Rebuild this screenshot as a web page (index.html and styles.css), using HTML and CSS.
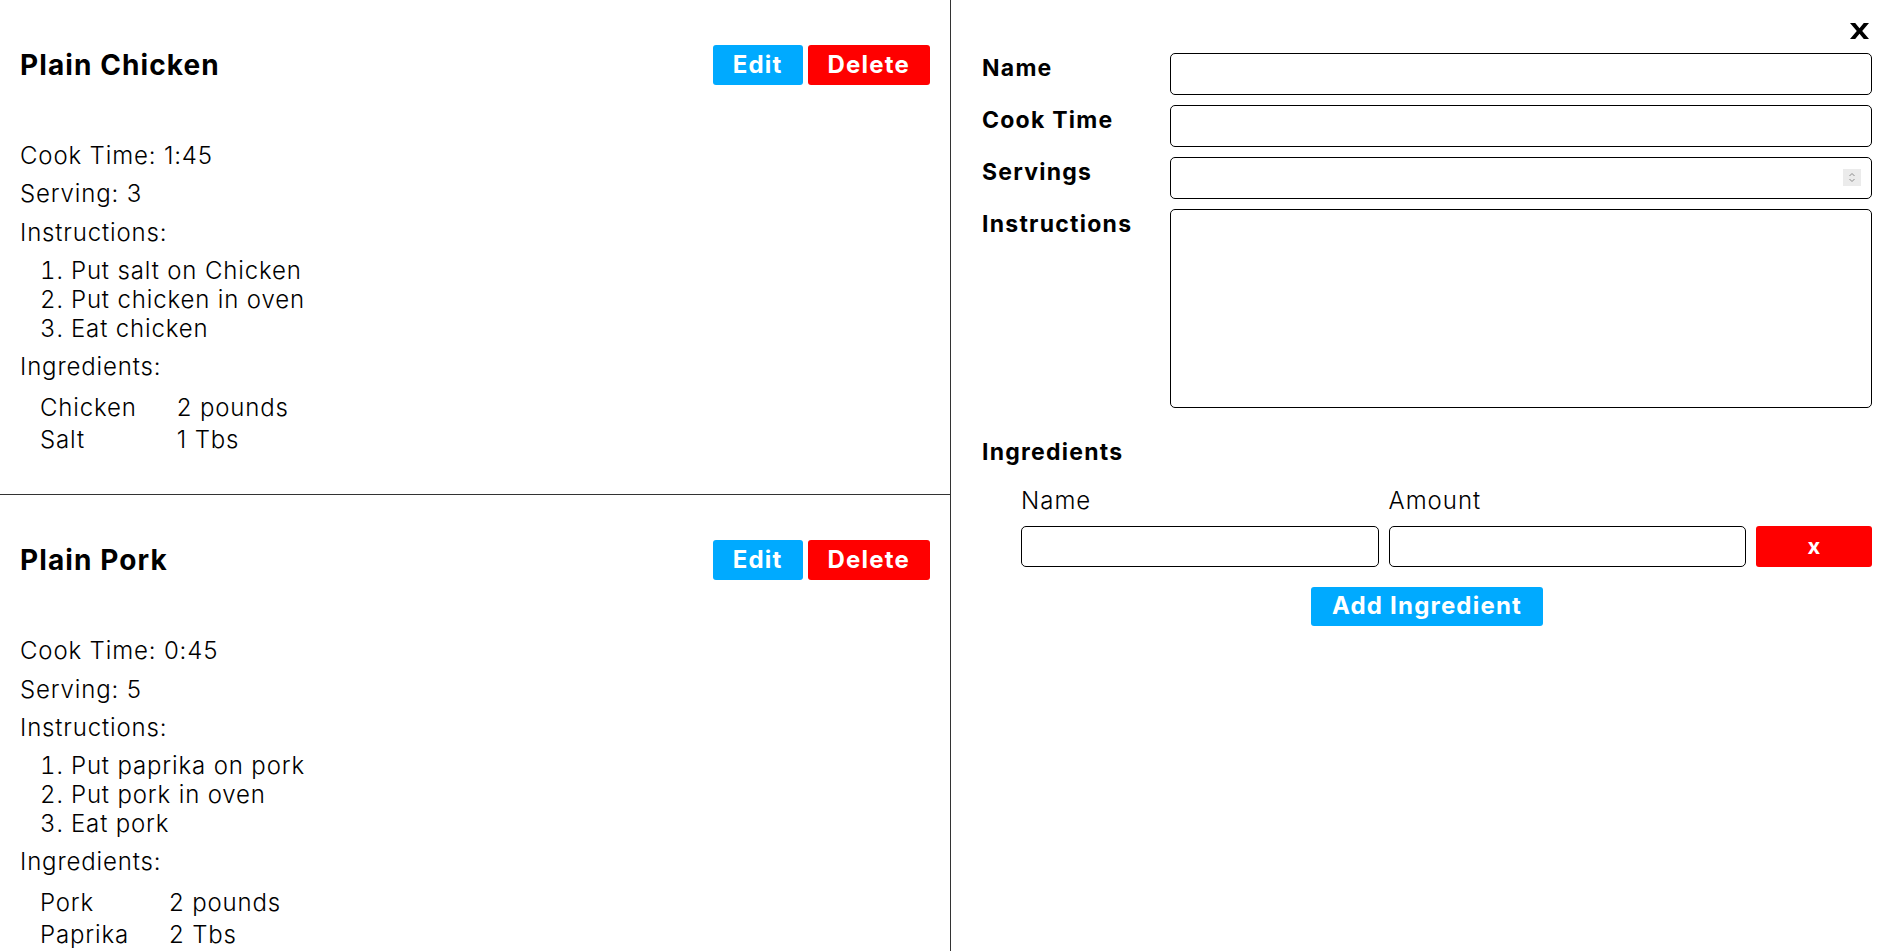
FILE: index.html
```html
<!DOCTYPE html>
<html lang="en">
<head>
<meta charset="utf-8">
<title>Recipes</title>
<link rel="stylesheet" href="styles.css">
</head>
<body>
<div class="app">
  <section class="recipes">
    <article class="recipe">
      <header class="recipe-head">
        <h2 class="recipe-title">Plain Chicken</h2>
        <div class="actions">
          <button class="btn btn-edit">Edit</button>
          <button class="btn btn-delete">Delete</button>
        </div>
      </header>
      <div class="recipe-body">
        <p>Cook Time: 1:45</p>
        <p>Serving: 3</p>
        <p>Instructions:</p>
        <ol class="steps">
          <li>Put salt on Chicken</li>
          <li>Put chicken in oven</li>
          <li>Eat chicken</li>
        </ol>
        <p>Ingredients:</p>
        <div class="ing-list">
          <span>Chicken</span><span>2 pounds</span>
          <span>Salt</span><span>1 Tbs</span>
        </div>
      </div>
    </article>
    <article class="recipe">
      <header class="recipe-head">
        <h2 class="recipe-title">Plain Pork</h2>
        <div class="actions">
          <button class="btn btn-edit">Edit</button>
          <button class="btn btn-delete">Delete</button>
        </div>
      </header>
      <div class="recipe-body">
        <p>Cook Time: 0:45</p>
        <p>Serving: 5</p>
        <p>Instructions:</p>
        <ol class="steps">
          <li>Put paprika on pork</li>
          <li>Put pork in oven</li>
          <li>Eat pork</li>
        </ol>
        <p>Ingredients:</p>
        <div class="ing-list">
          <span>Pork</span><span>2 pounds</span>
          <span>Paprika</span><span>2 Tbs</span>
        </div>
      </div>
    </article>
  </section>

  <aside class="editor">
    <div class="editor-top">
      <button class="close" aria-label="Close">
        <svg width="19" height="16" viewBox="0 0 19 16"><polygon points="0,0 5.2,0 9.5,5.3 13.8,0 19,0 12.2,8 19,16 13.8,16 9.5,10.7 5.2,16 0,16 6.8,8" fill="#000"/></svg>
      </button>
    </div>
    <form class="form">
      <div class="form-grid">
        <label class="form-label">Name</label>
        <input class="input" type="text">
        <label class="form-label">Cook Time</label>
        <input class="input" type="text">
        <label class="form-label">Servings</label>
        <div class="number-wrap">
          <input class="input input-number" type="number">
          <span class="spinner" aria-hidden="true">
            <svg width="18" height="17" viewBox="0 0 18 17"><path d="M6.5 7 L9 4.5 L11.5 7 M6.5 10 L9 12.5 L11.5 10" fill="none" stroke="#8a8a8a" stroke-width="1"/></svg>
          </span>
        </div>
        <label class="form-label">Instructions</label>
        <textarea class="input textarea"></textarea>
      </div>
      <h3 class="ing-heading">Ingredients</h3>
      <div class="ing-grid">
        <span class="ing-label">Name</span>
        <span class="ing-label">Amount</span>
        <span></span>
        <input class="input ing-input" type="text">
        <input class="input ing-input" type="text">
        <button type="button" class="btn btn-remove">x</button>
      </div>
      <div class="add-row">
        <button type="button" class="btn btn-add">Add Ingredient</button>
      </div>
    </form>
  </aside>
</div>
</body>
</html>
```
FILE: styles.css
```css
* { box-sizing: border-box; }
html, body { margin: 0; height: 100%; }
body {
  font-family: Inter, "Noto Sans", "Liberation Sans", sans-serif;
  color: #000;
  background: #fff;
  overflow: hidden;
}
.app {
  display: grid;
  grid-template-columns: 951px 1fr;
  height: 951px;
}
.recipes {
  border-right: 1px solid #333;
  overflow: hidden;
}
.recipe {
  padding: 45px 20px 37px;
}
.recipe + .recipe {
  border-top: 1px solid #333;
}
.recipe-head {
  display: flex;
  justify-content: space-between;
  align-items: center;
  height: 40px;
}
.recipe-title {
  margin: 0;
  font-size: 28px;
  font-weight: 700;
  letter-spacing: 1.1px;
}
.actions {
  display: flex;
  gap: 5px;
}
.btn {
  height: 40px;
  padding: 0 20px;
  border: 0;
  border-radius: 3px;
  color: #fff;
  font-family: inherit;
  font-weight: 700;
  font-size: 24px;
  line-height: 1;
  letter-spacing: 1.2px;
  cursor: pointer;
}
.btn-edit { background: #00aaff; }
.btn-delete { background: #ff0000; }
.recipe-body {
  margin-top: 57px;
  font-size: 24px;
  line-height: 28.8px;
  display: flex;
  flex-direction: column;
  align-items: flex-start;
  gap: 9.6px;
  font-weight: 300;
  letter-spacing: 0.85px;
}
.recipe-body p { margin: 0; }
.steps {
  margin: 0;
  padding: 0 0 0 20px;
  list-style-position: inside;
}
.ing-list {
  display: grid;
  grid-template-columns: max-content max-content;
  column-gap: 40px;
  row-gap: 4px;
  padding: 2px 0 2px 20px;
}

.editor {
  padding: 23px 29px 0 31px;
}
.editor-top {
  display: flex;
  justify-content: flex-end;
  height: 16px;
  margin-bottom: 14px;
  padding-right: 3px;
}
.close {
  border: 0;
  background: none;
  padding: 0;
  width: 19px;
  height: 16px;
  display: block;
  cursor: pointer;
}
.close svg { display: block; }
.form-grid {
  display: grid;
  grid-template-columns: 188px 1fr;
  row-gap: 10px;
}
.form-label {
  font-weight: 700;
  font-size: 23px;
  line-height: 28px;
  padding-top: 1px;
  letter-spacing: 1.25px;
}
.input {
  height: 42px;
  width: 100%;
  border: 1px solid #000;
  border-radius: 5px;
  padding: 0 10px;
  font-family: inherit;
  font-size: 20px;
  background: #fff;
}
.number-wrap {
  position: relative;
}
.input-number {
  -moz-appearance: textfield;
  padding-right: 36px;
}
.input-number::-webkit-inner-spin-button,
.input-number::-webkit-outer-spin-button {
  -webkit-appearance: none;
  margin: 0;
}
.spinner {
  position: absolute;
  right: 11px;
  top: 12px;
  width: 18px;
  height: 17px;
  background: #ebebeb;
}
.spinner svg { display: block; }
.textarea {
  height: 199px;
  resize: none;
  padding: 8px 10px;
}
.ing-heading {
  margin: 30px 0 0;
  font-size: 23px;
  font-weight: 700;
  line-height: 28px;
  letter-spacing: 1.25px;
}
.ing-grid {
  margin-top: 21px;
  padding-left: 39px;
  display: grid;
  grid-template-columns: 1fr 1fr 116px;
  column-gap: 10px;
  row-gap: 10px;
}
.ing-label {
  font-size: 24px;
  line-height: 28.8px;
  font-weight: 300;
  letter-spacing: 1px;
}
.ing-input { height: 41px; }
.btn-remove {
  height: 41px;
  padding: 0;
  background: #ff0000;
  font-size: 22px;
  letter-spacing: 0;
}
.add-row {
  display: flex;
  justify-content: center;
  margin-top: 20px;
}
.btn-add {
  height: 39px;
  padding: 0 21px;
  background: #00aaff;
}
```
